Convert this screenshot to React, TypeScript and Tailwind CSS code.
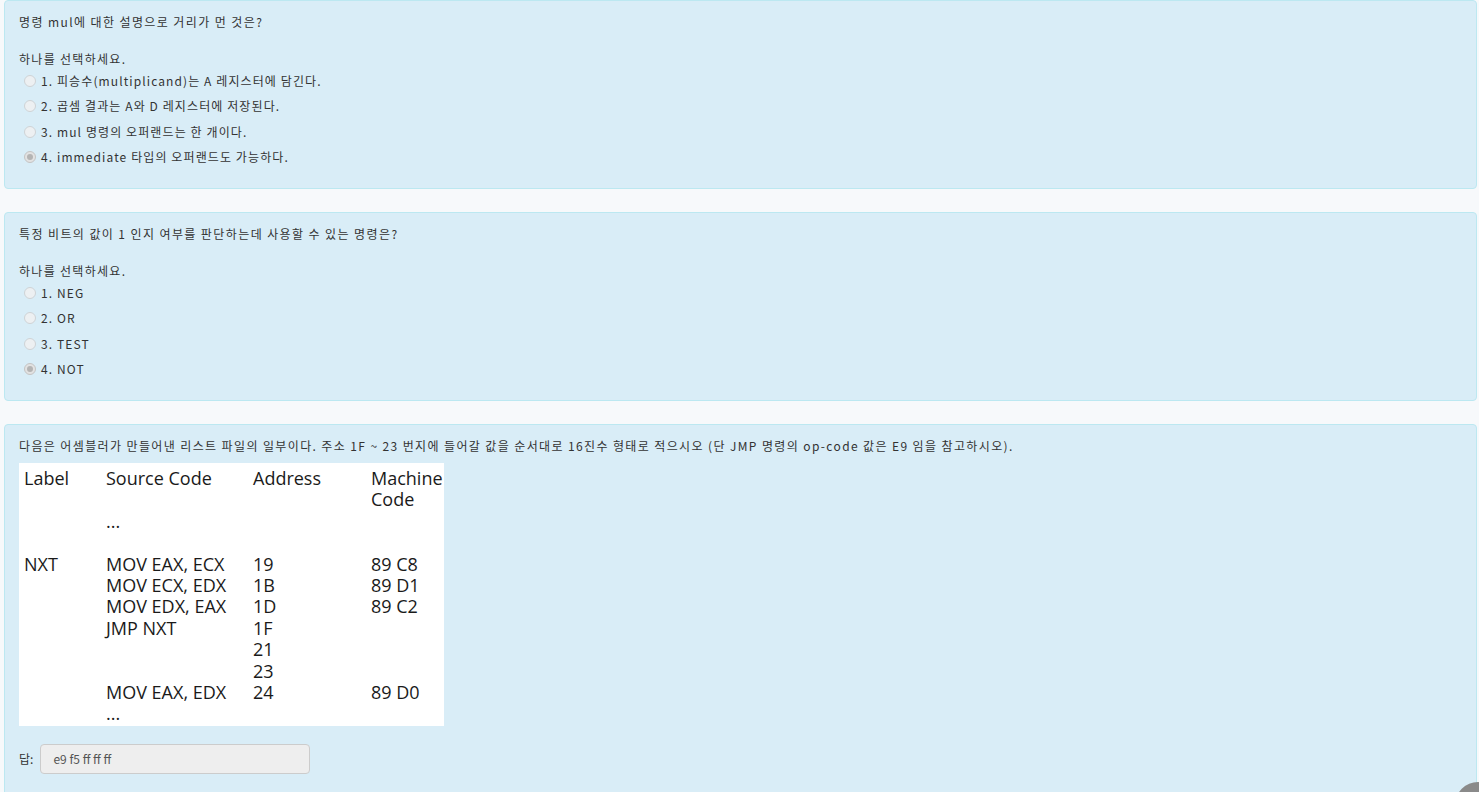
import React from 'react';

type Option = { label: string; checked?: boolean };

const questions: { title: string; options: Option[] }[] = [
  {
    title: '명령 mul에 대한 설명으로 거리가 먼 것은?',
    options: [
      { label: '1. 피승수(multiplicand)는 A 레지스터에 담긴다.' },
      { label: '2. 곱셈 결과는 A와 D 레지스터에 저장된다.' },
      { label: '3. mul 명령의 오퍼랜드는 한 개이다.' },
      { label: '4. immediate 타입의 오퍼랜드도 가능하다.', checked: true },
    ],
  },
  {
    title: '특정 비트의 값이 1 인지 여부를 판단하는데 사용할 수 있는 명령은?',
    options: [
      { label: '1. NEG' },
      { label: '2. OR' },
      { label: '3. TEST' },
      { label: '4. NOT', checked: true },
    ],
  },
];

// listing rows: label, source, address, machine code
const listing: [string, string, string, string][] = [
  ['', '...', '', ''],
  ['', '', '', ''],
  ['NXT', 'MOV EAX, ECX', '19', '89 C8'],
  ['', 'MOV ECX, EDX', '1B', '89 D1'],
  ['', 'MOV EDX, EAX', '1D', '89 C2'],
  ['', 'JMP NXT', '1F', ''],
  ['', '', '21', ''],
  ['', '', '23', ''],
  ['', 'MOV EAX, EDX', '24', '89 D0'],
  ['', '...', '', ''],
];

function Radio({ checked }: { checked?: boolean }) {
  return (
    <span
      className={`w-[12px] h-[12px] rounded-full border flex items-center justify-center shrink-0 ${
        checked ? 'border-[#c4c4c4] bg-[#e2e2e2]' : 'border-[#cfd3d6] bg-[#edf0f2]'
      }`}
    >
      {checked && <span className="w-[6px] h-[6px] rounded-full bg-[#b4b4b4]" />}
    </span>
  );
}

function Panel({ children }: { children: React.ReactNode }) {
  return (
    <div className="ml-[4px] mr-[2px] mb-[23px] bg-[#d9edf7] border border-[#bce8f1] rounded-[4px] pl-[14px] pt-[12px] pb-[18px]">
      {children}
    </div>
  );
}

export default function App() {
  return (
    <div
      className="min-h-screen bg-[#f7f9fb] text-[#333] text-[12px] leading-[18px] overflow-hidden"
      style={{ fontFamily: '"Noto Sans CJK KR", "Noto Sans", sans-serif' }}
    >
      {questions.map((q, i) => (
        <Panel key={i}>
          <div className="tracking-[1.4px]">{q.title}</div>
          <div className="mt-[19px] tracking-[1.3px]">하나를 선택하세요.</div>
          <div>
            {q.options.map((o) => (
              <div key={o.label} className="h-[25.5px] flex items-center gap-[5px] pl-[5px]">
                <Radio checked={o.checked} />
                <span className="tracking-[1.1px]">{o.label}</span>
              </div>
            ))}
          </div>
        </Panel>
      ))}

      <div className="ml-[4px] mr-[2px] bg-[#d9edf7] border border-[#bce8f1] rounded-[4px] pl-[14px] pt-[12px] pb-[30px]">
        <div className="tracking-[1.38px] whitespace-nowrap">
          다음은 어셈블러가 만들어낸 리스트 파일의 일부이다. 주소 1F ~ 23 번지에 들어갈 값을 순서대로 16진수 형태로
          적으시오 (단 JMP 명령의 op-code 값은 E9 임을 참고하시오).
        </div>
        <div
          className="mt-[8px] w-[425px] h-[263px] bg-white pl-[5px] pt-[5px] text-[18px] leading-[21.4px] text-[#1a1a1a]"
          style={{ fontFamily: '"Open Sans", "Noto Sans", sans-serif' }}
        >
          <div className="grid grid-cols-[82px_147px_118px_1fr]">
            <div>Label</div>
            <div>Source Code</div>
            <div>Address</div>
            <div>
              Machine
              <br />
              Code
            </div>
            {listing.map((r, idx) => (
              <React.Fragment key={idx}>
                <div className="h-[21.4px]">{r[0]}</div>
                <div className="h-[21.4px]">{r[1]}</div>
                <div className="h-[21.4px]">{r[2]}</div>
                <div className="h-[21.4px]">{r[3]}</div>
              </React.Fragment>
            ))}
          </div>
        </div>
        <div className="mt-[18px] flex items-center gap-[7px]">
          <span>답:</span>
          <div className="w-[270px] h-[30px] bg-[#eeeeee] border border-[#cccccc] rounded-[4px] pl-[12px] flex items-center text-[#555]">
            e9 f5 ff ff ff
          </div>
        </div>
      </div>

      <div className="fixed left-[1455px] top-[782px] w-[46px] h-[46px] rounded-full bg-[#8a8a8a]" />
    </div>
  );
}
